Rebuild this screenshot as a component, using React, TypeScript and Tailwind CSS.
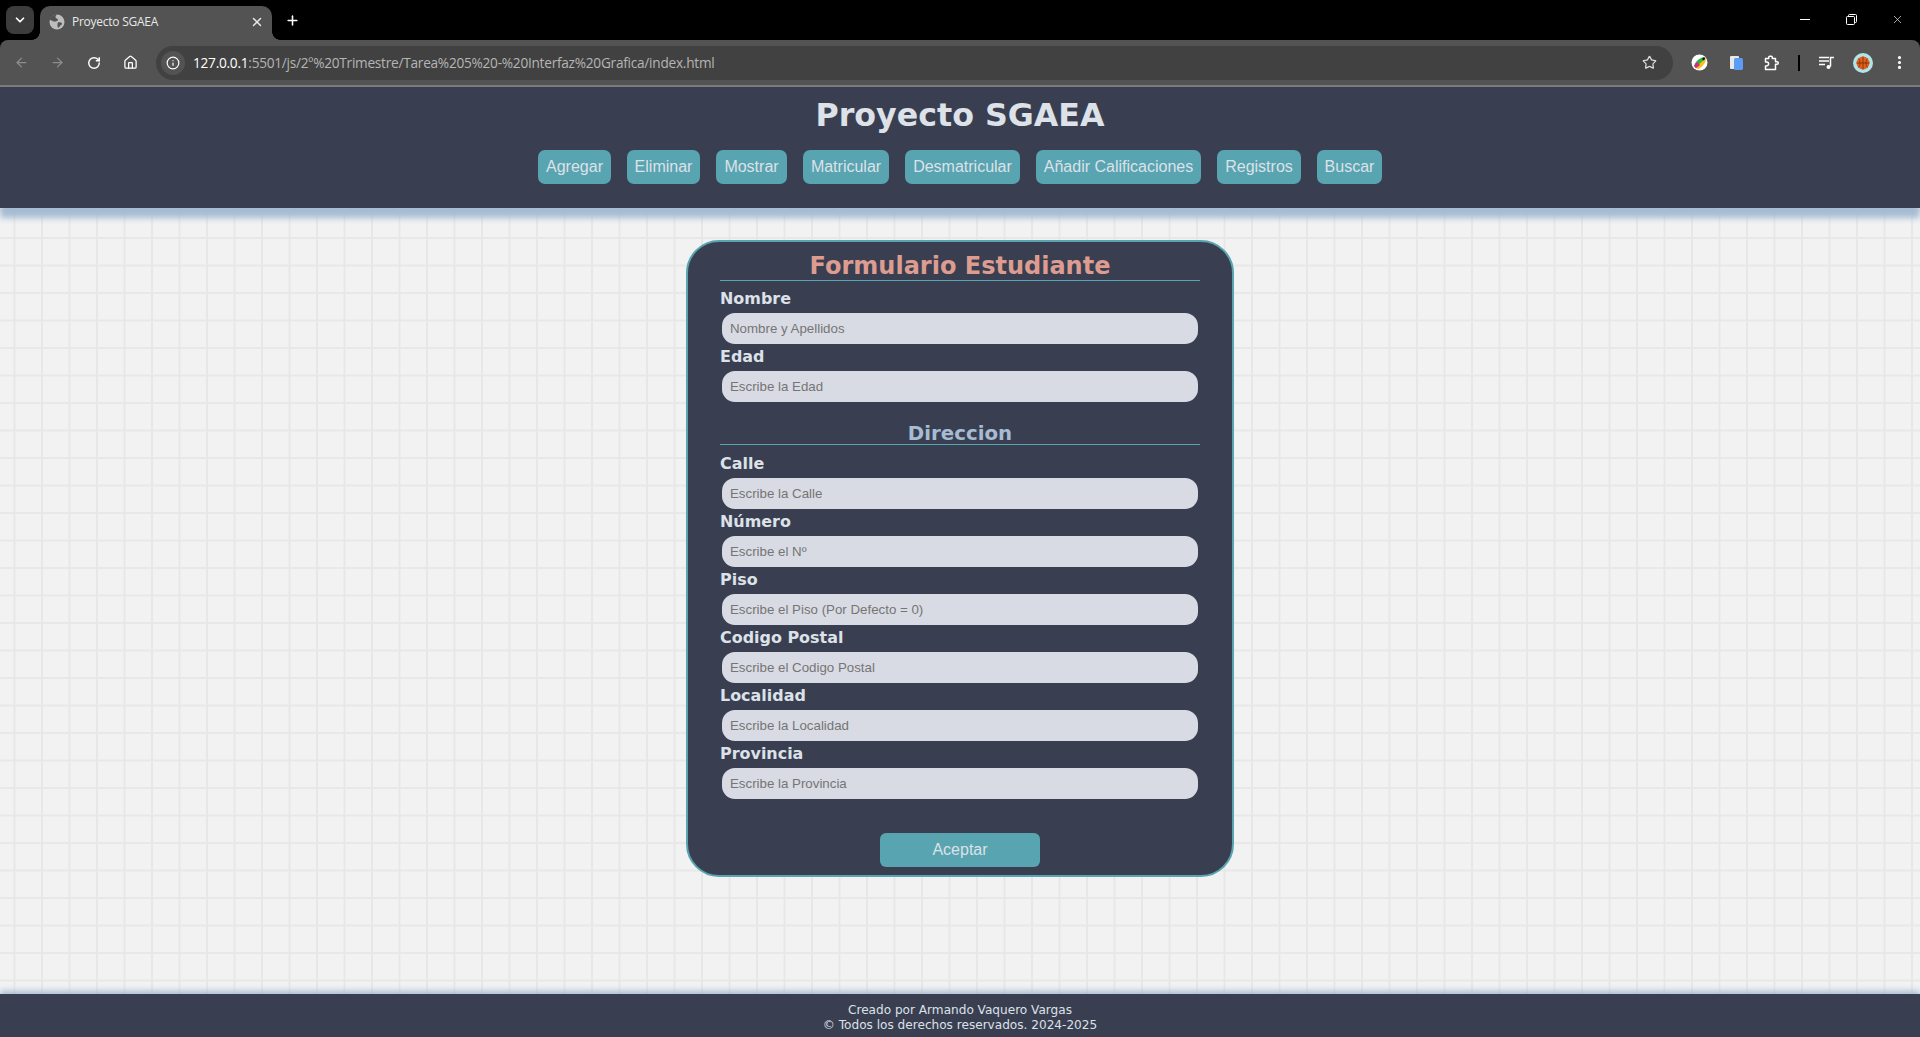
import React from "react";
import { ArrowLeft, ArrowRight, RotateCw, Home, Info, Star, EllipsisVertical, X, Plus, ChevronDown } from "lucide-react";

const navs = [
  ["Agregar", "w-[73px]"],
  ["Eliminar", "w-[73px]"],
  ["Mostrar", "w-[71px]"],
  ["Matricular", "w-[86px]"],
  ["Desmatricular", "w-[115px]"],
  ["Añadir Calificaciones", "w-[165px]"],
  ["Registros", "w-[84px]"],
  ["Buscar", "w-[65px]"],
];

function Field({ label, placeholder }: { label: string; placeholder: string }) {
  return (
    <div className="flex flex-col">
      <label className="h-[27px] text-[15.950px] leading-[25px] font-bold text-[#dde1e8] font-['DejaVu_Sans',Verdana,sans-serif]">{label}</label>
      <input
        readOnly
        placeholder={placeholder}
        className="mx-[2px] h-[31px] rounded-[13px] bg-[#d8dbe3] px-[8px] text-[13.3px] font-['Liberation_Sans',Arial,sans-serif] text-[#333] placeholder:text-[#757575] outline-none"
      />
    </div>
  );
}

function Heading({ children, className }: { children: React.ReactNode; className: string }) {
  return (
    <h2 className={`border-b border-[#58a4b0] text-center font-bold font-['DejaVu_Sans',Verdana,sans-serif] ${className}`}>{children}</h2>
  );
}

export default function App() {
  return (
    <div className="flex h-[1037px] w-full flex-col overflow-hidden bg-[#f2f2f2] font-['Liberation_Sans',Arial,sans-serif]">
      {/* Browser chrome */}
      <div className="z-20 flex h-[87px] shrink-0 flex-col bg-black">
        <div className="flex h-[40px] shrink-0 items-end pl-[6px]">
          <div className="mb-[6px] flex h-[28px] w-[28px] items-center justify-center rounded-[8px] bg-[#3c3c3c] text-white">
            <ChevronDown size={14} strokeWidth={3} />
          </div>
          <div className="relative ml-[6px] flex h-[34px] w-[232px] items-center rounded-t-[10px] bg-[#535353] pb-[2px] pl-[9px] pr-[8px] text-white">
            <span className="absolute bottom-0 left-[-8px] h-[8px] w-[8px] bg-[radial-gradient(circle_at_0_0,#000_7.5px,#535353_8px)]" />
            <span className="absolute bottom-0 right-[-8px] h-[8px] w-[8px] bg-[radial-gradient(circle_at_100%_0,#000_7.5px,#535353_8px)]" />
            <svg width="16" height="16" viewBox="0 0 16 16" className="shrink-0">
              <circle cx="8" cy="8" r="7.500" fill="#bdbdbd" />
              <path d="M8 .5C6.500 2 6 3 7 4s2 1 2 2-1.500 1-2.500 1.500S3.500 7 2.500 6.500.7 5.500.7 5.500C1.500 3 4.500.5 8 .5zM9 8.500c1.500-.5 3.500 0 4 1s-1.500 1.500-2 2.500-1.500 2-2 1.500-.5-2-.5-3 0-1.700.5-2z" fill="#535353" />
            </svg>
            <span className="ml-[7px] flex-1 text-[12px] leading-none text-[#e8e8e8] font-['Open_Sans',sans-serif] tracking-[-0.25px]">Proyecto SGAEA</span>
            <X size={14} strokeWidth={2.5} className="text-[#e8e8e8]" />
          </div>
          <div className="mb-[8px] ml-[8px] flex h-[24px] w-[24px] items-center justify-center text-white">
            <Plus size={15} strokeWidth={2.5} />
          </div>
          <div className="mb-[3px] ml-auto flex h-[36px] items-center text-white">
            <div className="flex w-[46px] justify-center"><div className="h-[1px] w-[10px] bg-white" /></div>
            <div className="flex w-[46px] justify-center">
              <svg width="11" height="11" viewBox="0 0 11 11" fill="none" stroke="currentColor">
                <rect x="0.5" y="2.500" width="8" height="8" rx="1" />
                <path d="M2.500 2.500V1.500a1 1 0 0 1 1-1h6a1 1 0 0 1 1 1v6a1 1 0 0 1-1 1h-1" />
              </svg>
            </div>
            <div className="flex w-[46px] justify-center"><X size={13} strokeWidth={1.2} /></div>
          </div>
        </div>
        <div className="flex h-[47px] shrink-0 items-center rounded-t-[8px] border-b-[2px] border-[#7c7c7c] bg-[#535353] pl-[10px]">
          <div className="flex w-[146px] shrink-0 items-center text-[#dedede]">
            <ArrowLeft size={15} className="ml-[4px] text-[#8c8c8c]" />
            <ArrowRight size={15} className="ml-[21px] text-[#8c8c8c]" />
            <RotateCw size={14} strokeWidth={2.5} className="ml-[22px] text-white" />
            <Home size={15} strokeWidth={2} className="ml-[22px] text-white" />
          </div>
          <div className="flex h-[34px] w-[1517px] shrink-0 items-center rounded-full bg-[#414141] pl-[5px] pr-[16px]">
            <div className="flex h-[24px] w-[24px] items-center justify-center rounded-full bg-[#535353] text-white">
              <Info size={14} />
            </div>
            <span className="ml-[8px] flex-1 pt-[1px] text-[13.650px] text-[#b5b5b5] font-['Open_Sans',sans-serif] tracking-[-0.25px]">
              <span className="text-white">127.0.0.1</span>:5501/js/2º%20Trimestre/Tarea%205%20-%20Interfaz%20Grafica/index.html
            </span>
            <Star size={15} className="text-[#dcdcdc]" />
          </div>
          <div className="flex flex-1 items-center">
            <svg width="17" height="17" viewBox="0 0 17 17" className="ml-[18px] shrink-0">
              <circle cx="8.500" cy="8.500" r="8" fill="#fff" />
              <path d="M3 12C4 8 7 5 12 3l2 2c-2 5-5 8-9 9z" fill="#2fb344" />
              <path d="M5 14c2-3 4-5 9-9l1 1c-1 4-5 8-8 9z" fill="#f0c419" />
              <path d="M3 12l3-4 3 3-4 3z" fill="#e0218a" />
              <path d="M11 5l2-2 1.500 1.500-2 2z" fill="#111" />
            </svg>
            <svg width="14" height="16" viewBox="0 0 14 16" className="ml-[22px] shrink-0">
              <rect x="0" y="1" width="9" height="13" rx="1" fill="#e8e8e8" />
              <rect x="4" y="3" width="9" height="12" rx="1.500" fill="#5c9cf5" />
            </svg>
            <svg width="16" height="16" viewBox="0 0 16 16" fill="none" stroke="#fff" strokeWidth="1.500" className="ml-[20px] shrink-0">
              <path d="M1.500 3.500h3.200V2.200a1 1 0 0 1 1-1h1.600a1 1 0 0 1 1 1v1.300h3.200v3.200h1.500a1.300 1.300 0 0 1 0 2.600h-1.500v5.200H1.500v-3.600h1.200a1.400 1.400 0 0 0 0-3.800H1.500z" strokeLinejoin="round" />
            </svg>
            <div className="ml-[18px] h-[16px] w-[2px] shrink-0 bg-black" />
            <svg width="16" height="14" viewBox="0 0 16 14" fill="none" stroke="#fff" strokeWidth="1.500" className="ml-[19px] shrink-0">
              <path d="M0 1.500h10M0 5h10M0 8.500h6" />
              <path d="M11.500 10.500V1.500h3.500" />
              <circle cx="9.500" cy="11" r="2" fill="#fff" stroke="none" />
            </svg>
            <svg width="20" height="20" viewBox="0 0 20 20" className="ml-[18px] shrink-0">
              <circle cx="10" cy="10" r="10" fill="#b0e4e8" />
              <circle cx="10" cy="10" r="6.500" fill="#e2611c" />
              <path d="M3.500 10h13M10 3.500v13M5.500 5.500c2 2 2 7 0 9M14.500 5.500c-2 2-2 7 0 9" stroke="#7a2c08" strokeWidth="0.8" fill="none" />
            </svg>
            <EllipsisVertical size={17} strokeWidth={2.5} className="ml-[18px] shrink-0 text-white" />
          </div>
        </div>
      </div>

      {/* Page header */}
      <header className="z-10 flex h-[121px] shrink-0 flex-col items-center bg-[#393f51] shadow-[0_10px_6px_0_#a6bcd2]">
        <h1 className="mt-[5px] h-[46px] text-[31.700px] leading-[46px] font-bold text-[#dde1e8] font-['DejaVu_Sans',Verdana,sans-serif]">Proyecto SGAEA</h1>
        <nav className="mt-[12px] flex gap-[16px]">
          {navs.map(([n, w]) => (
            <button key={n} className={`h-[34px] rounded-[7px] bg-[#58a4b0] text-center text-[16px] leading-[34px] text-[#dde1e8] ${w}`}>{n}</button>
          ))}
        </nav>
      </header>

      {/* Main */}
      <main className="flex flex-1 justify-center bg-[#f2f2f2] bg-[linear-gradient(to_right,#e7e7e7_1.5px,transparent_1.5px),linear-gradient(to_bottom,#e8e8e8_1.5px,transparent_1.5px)] bg-[length:27.5px_27.5px] bg-[position:13.500px_1.500px] pt-[32px]">
        <form className="h-[637px] w-[548px] rounded-[33px] border-[2px] border-[#58a4b0] bg-[#393f51] px-[32px] pt-[9px]">
          <Heading className="mb-[5px] h-[30px] text-[24px] leading-[30px] text-[#dd9c90]">Formulario Estudiante</Heading>
          <Field label="Nombre" placeholder="Nombre y Apellidos" />
          <Field label="Edad" placeholder="Escribe la Edad" />
          <Heading className="mb-[6px] mt-[18px] h-[25px] text-[19.800px] leading-[27px] text-[#a6bcd2]">Direccion</Heading>
          <Field label="Calle" placeholder="Escribe la Calle" />
          <Field label="Número" placeholder="Escribe el Nº" />
          <Field label="Piso" placeholder="Escribe el Piso (Por Defecto = 0)" />
          <Field label="Codigo Postal" placeholder="Escribe el Codigo Postal" />
          <Field label="Localidad" placeholder="Escribe la Localidad" />
          <Field label="Provincia" placeholder="Escribe la Provincia" />
          <div className="mt-[34px] flex justify-center">
            <button type="button" className="h-[34px] w-[160px] rounded-[6px] bg-[#58a4b0] text-[16px] text-[#dde1e8]">Aceptar</button>
          </div>
        </form>
      </main>

      {/* Footer */}
      <footer className="z-10 flex h-[43px] shrink-0 flex-col items-center justify-center bg-[#393f51] pt-[4px] text-center text-[12.100px] leading-[15px] text-[#dde1e8] font-['DejaVu_Sans',Verdana,sans-serif] shadow-[0_-3px_6px_0_#a6bcd2]">
        <p>Creado por Armando Vaquero Vargas</p>
        <p>© Todos los derechos reservados. 2024-2025</p>
      </footer>
    </div>
  );
}
